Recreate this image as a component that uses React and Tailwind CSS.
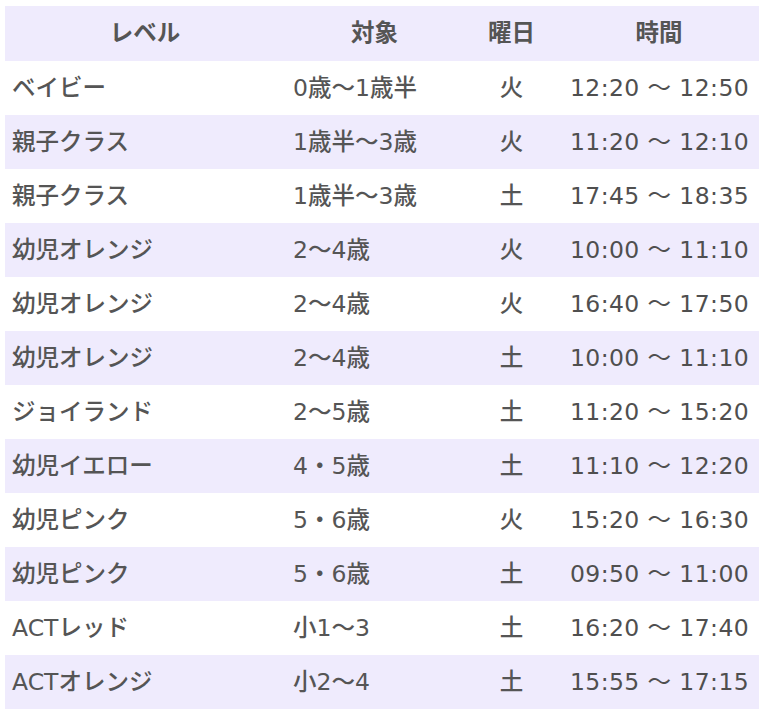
import React from 'react';

const rows = [
  ['ベイビー', '0歳〜1歳半', '火', '12:20 ～ 12:50'],
  ['親子クラス', '1歳半〜3歳', '火', '11:20 ～ 12:10'],
  ['親子クラス', '1歳半〜3歳', '土', '17:45 ～ 18:35'],
  ['幼児オレンジ', '2〜4歳', '火', '10:00 ～ 11:10'],
  ['幼児オレンジ', '2〜4歳', '火', '16:40 ～ 17:50'],
  ['幼児オレンジ', '2〜4歳', '土', '10:00 ～ 11:10'],
  ['ジョイランド', '2〜5歳', '土', '11:20 ～ 15:20'],
  ['幼児イエロー', '4・5歳', '土', '11:10 ～ 12:20'],
  ['幼児ピンク', '5・6歳', '火', '15:20 ～ 16:30'],
  ['幼児ピンク', '5・6歳', '土', '09:50 ～ 11:00'],
  ['ACTレッド', '小1〜3', '土', '16:20 ～ 17:40'],
  ['ACTオレンジ', '小2〜4', '土', '15:55 ～ 17:15'],
];

export default function App() {
  return (
    <div className="bg-white pt-[6px] px-[5px] font-['DejaVu_Sans','Noto_Sans_CJK_JP',sans-serif] text-[#555]">
      <table className="w-[754px] border-collapse text-[23.5px] leading-none">
        <colgroup>
          <col className="w-[280px]" />
          <col className="w-[179px]" />
          <col className="w-[95px]" />
          <col className="w-[200px]" />
        </colgroup>
        <thead>
          <tr className="bg-[#efebfd] h-[55px]">
            <th className="font-bold text-center">レベル</th>
            <th className="font-bold text-center">対象</th>
            <th className="font-bold text-center">曜日</th>
            <th className="font-bold text-center">時間</th>
          </tr>
        </thead>
        <tbody>
          {rows.map((r, i) => (
            <tr key={i} className={`h-[54px] ${i % 2 === 1 ? 'bg-[#efebfd]' : 'bg-white'}`}>
              <td className="pl-[7px] pt-[2px] font-medium">{r[0]}</td>
              <td className="pl-[8px] pt-[2px] font-medium">{r[1]}</td>
              <td className="pt-[2px] text-center font-medium">{r[2]}</td>
              <td className="pl-[11px] pt-[2px] tracking-[0.4px] text-[#4f4f4f]">{r[3]}</td>
            </tr>
          ))}
        </tbody>
      </table>
    </div>
  );
}
